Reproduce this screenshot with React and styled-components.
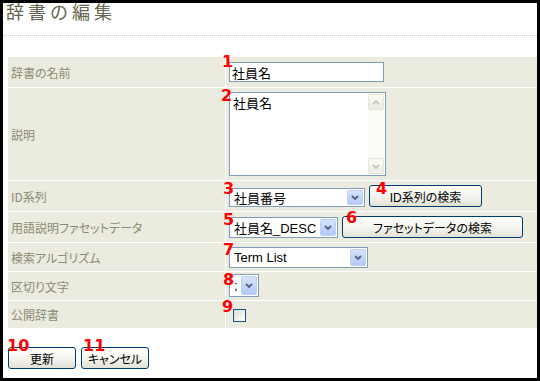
import React from 'react';
import styled, { createGlobalStyle } from 'styled-components';

const GlobalStyle = createGlobalStyle`
  html, body {
    margin: 0;
    padding: 0;
    background: #000;
  }
  body {
    font-family: "Liberation Sans", "Noto Sans CJK JP", sans-serif;
  }
`;

const Frame = styled.div`
  width: 540px;
  height: 381px;
  box-sizing: border-box;
  padding: 3px;
  background: #000;
`;

const Page = styled.div`
  width: 534px;
  height: 375px;
  background: #fff;
  overflow: hidden;
`;

const Title = styled.h1`
  margin: 0;
  padding: 0 0 0 3px;
  height: 32px;
  box-sizing: border-box;
  font: normal 18px/16px "Noto Sans CJK JP", sans-serif;
  letter-spacing: 4px;
  color: #666650;
`;

const Divider = styled.hr`
  margin: 0;
  height: 0;
  border: 0;
  border-top: 1px dotted #c8c8c8;
`;

const Table = styled.div`
  margin: 21px 0 0 5px;
  display: grid;
  grid-template-columns: 217px 1fr;
  grid-template-rows: 30px 92px 30px 30px 28px 28px 27px;
  gap: 1px;
`;

const Label = styled.div`
  background: #ebebe0;
  display: flex;
  align-items: center;
  padding-left: 3px;
  font: 12px "Noto Sans CJK JP", sans-serif;
  font-feature-settings: "palt";
  color: #8a8a72;
`;

const Value = styled.div`
  background: #ebebe0;
  display: flex;
  align-items: center;
  gap: 4px;
  padding-left: 3px;
`;

const Field = styled.div`
  position: relative;
  display: inline-flex;
  flex-shrink: 0;
  margin-left: ${p => p.$ml || 0}px;
  margin-top: ${p => p.$mt || 0}px;
`;

const Marker = styled.span`
  position: absolute;
  left: ${p => p.$x}px;
  top: ${p => p.$y}px;
  z-index: 2;
  color: #f00;
  font: bold 16px/16px "DejaVu Sans", Verdana, sans-serif;
  pointer-events: none;
`;

const TextInput = styled.input`
  width: 155px;
  height: 20px;
  box-sizing: border-box;
  margin: 0;
  padding: 0 2px;
  border: 1px solid #7f9db9;
  background: #fff;
  outline: none;
  font: 13px "Liberation Sans", "Noto Sans CJK JP", sans-serif;
  color: #000;
`;

const TextArea = styled.div`
  width: 157px;
  height: 84px;
  box-sizing: border-box;
  border: 1px solid #7f9db9;
  background: #fff;
  display: flex;
  padding: 1px;
`;

const AreaText = styled.div`
  flex: 1;
  padding: 1px 2px;
  font: 13px/16px "Noto Sans CJK JP", sans-serif;
  color: #000;
`;

const ScrollTrack = styled.div`
  width: 16px;
  background: #fbfbf7;
  display: flex;
  flex-direction: column;
  justify-content: space-between;
`;

const ScrollArrow = styled.div`
  height: 16px;
  box-sizing: border-box;
  border: 1px solid #e6e5dc;
  border-radius: 2px;
  background: linear-gradient(#fbfbf6, #eeede4);
  display: flex;
  align-items: center;
  justify-content: center;
`;

const SelectBox = styled.div`
  width: ${p => p.$w}px;
  height: ${p => p.$h}px;
  box-sizing: border-box;
  border: 1px solid #7f9db9;
  background: #fff;
  display: flex;
  align-items: stretch;
  padding: 1px;
`;

const SelectText = styled.span`
  flex: 1;
  min-width: 0;
  overflow: hidden;
  white-space: nowrap;
  display: flex;
  align-items: center;
  padding-left: 3px;
  font: 13px "Liberation Sans", "Noto Sans CJK JP", sans-serif;
  color: #000;
`;

const DropButton = styled.span`
  width: 16px;
  flex-shrink: 0;
  box-sizing: border-box;
  border: 1px solid #bcd0f8;
  border-radius: 2px;
  background: linear-gradient(#d6e2fd, #b5c9f7);
  display: flex;
  align-items: center;
  justify-content: center;
`;

const Button = styled.button`
  width: ${p => p.$w}px;
  height: 22px;
  box-sizing: border-box;
  margin: 0;
  padding: 0;
  border: 1px solid #003c74;
  border-radius: 3px;
  background: linear-gradient(#ffffff, #f4f4ee 55%, #e2e1d6);
  font: 12px "Liberation Sans", "Noto Sans CJK JP", sans-serif;
  font-feature-settings: "palt";
  color: #000;
`;

const CheckBox = styled.span`
  display: block;
  width: 13px;
  height: 13px;
  box-sizing: border-box;
  border: 1px solid #1c5180;
  background: linear-gradient(135deg, #dcdcd4, #ffffff);
`;

const ButtonBar = styled.div`
  display: flex;
  gap: 5px;
  margin: 19px 0 0 5px;
`;

const Chevron = ({ color = '#4d6185', up = false }) => (
  <svg width="8" height="5" viewBox="0 0 8 5">
    <polyline
      points={up ? '1,4 4,1 7,4' : '1,1 4,4 7,1'}
      fill="none"
      stroke={color}
      strokeWidth="1.8"
    />
  </svg>
);

const Select = ({ w, h, children }) => (
  <SelectBox $w={w} $h={h}>
    <SelectText>{children}</SelectText>
    <DropButton>
      <Chevron />
    </DropButton>
  </SelectBox>
);

export default function App() {
  return (
    <Frame>
      <GlobalStyle />
      <Page>
        <Title>辞書の編集</Title>
        <Divider />
        <Table>
          <Label>辞書の名前</Label>
          <Value>
            <Field>
              <TextInput defaultValue="社員名" readOnly />
              <Marker $x={-7} $y={-8}>1</Marker>
            </Field>
          </Value>

          <Label>説明</Label>
          <Value>
            <Field>
              <TextArea>
                <AreaText>社員名</AreaText>
                <ScrollTrack>
                  <ScrollArrow>
                    <Chevron up color="#c6c5bc" />
                  </ScrollArrow>
                  <ScrollArrow>
                    <Chevron color="#c6c5bc" />
                  </ScrollArrow>
                </ScrollTrack>
              </TextArea>
              <Marker $x={-8} $y={-4}>2</Marker>
            </Field>
          </Value>

          <Label>ID系列</Label>
          <Value>
            <Field $mt={3}>
              <Select w={136} h={19}>社員番号</Select>
              <Marker $x={-6} $y={-7}>3</Marker>
            </Field>
            <Field>
              <Button $w={113}>ID系列の検索</Button>
              <Marker $x={7} $y={-4}>4</Marker>
            </Field>
          </Value>

          <Label>用語説明ファセットデータ</Label>
          <Value>
            <Field>
              <Select w={109} h={21}>社員名_DESC</Select>
              <Marker $x={-6} $y={-5}>5</Marker>
            </Field>
            <Field>
              <Button $w={181}>ファセットデータの検索</Button>
              <Marker $x={4} $y={-6}>6</Marker>
            </Field>
          </Value>

          <Label>検索アルゴリズム</Label>
          <Value>
            <Field>
              <Select w={139} h={21}>Term List</Select>
              <Marker $x={-6} $y={-5}>7</Marker>
            </Field>
          </Value>

          <Label>区切り文字</Label>
          <Value>
            <Field $mt={-2}>
              <Select w={30} h={23}>;</Select>
              <Marker $x={-6} $y={-2}>8</Marker>
            </Field>
          </Value>

          <Label>公開辞書</Label>
          <Value>
            <Field $ml={4} $mt={1}>
              <CheckBox />
              <Marker $x={-11} $y={-10}>9</Marker>
            </Field>
          </Value>
        </Table>

        <ButtonBar>
          <Field>
            <Button $w={68}>更新</Button>
            <Marker $x={-1} $y={-9}>10</Marker>
          </Field>
          <Field>
            <Button $w={68}>キャンセル</Button>
            <Marker $x={2} $y={-9}>11</Marker>
          </Field>
        </ButtonBar>
      </Page>
    </Frame>
  );
}
